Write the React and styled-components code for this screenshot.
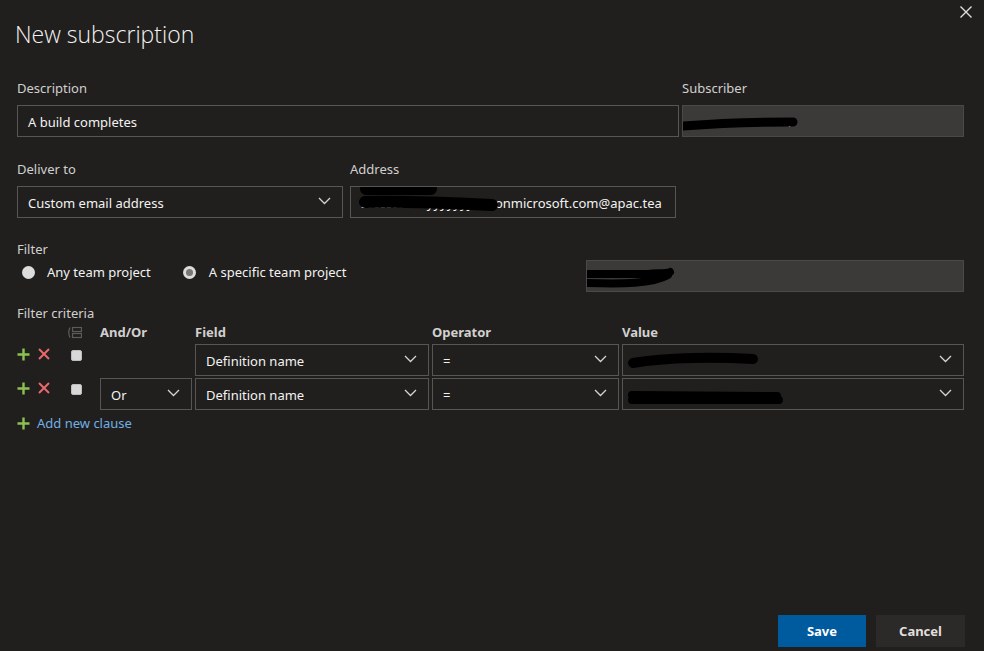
import React from "react";
import styled, { createGlobalStyle } from "styled-components";

const GlobalStyle = createGlobalStyle`
  html, body {
    margin: 0;
    padding: 0;
    background: #201f1e;
  }
  body {
    font-family: "Noto Sans", "Open Sans", sans-serif;
    font-size: 13px;
    color: #f3f2f1;
  }
`;

const Dialog = styled.div`
  position: relative;
  display: flex;
  flex-direction: column;
  min-height: 651px;
  box-sizing: border-box;
  padding: 0 20px 4px 17px;
`;

const Title = styled.h1`
  margin: 17px 0 0 -2px;
  font-family: "Open Sans", "Noto Sans", sans-serif;
  font-weight: 300;
  font-size: 23px;
  line-height: 34px;
  color: #f3f2f1;
`;

const CloseButton = styled.button`
  position: absolute;
  top: 5px;
  right: 11px;
  width: 14px;
  height: 14px;
  padding: 0;
  border: 0;
  background: none;
  display: flex;
  cursor: pointer;
`;

const Row = styled.div`
  display: grid;
  grid-template-columns: ${(p) => p.$cols};
  column-gap: ${(p) => p.$gap || 3}px;
  margin-top: ${(p) => p.$top || 0}px;
`;

const Field = styled.div`
  display: flex;
  flex-direction: column;
  margin-top: ${(p) => p.$top || 0}px;
`;

const Label = styled.div`
  font-size: 13px;
  line-height: 18px;
  color: #d2d0ce;
  margin-top: ${(p) => p.$top || 0}px;
  margin-bottom: ${(p) => (p.$gap === undefined ? 8 : p.$gap)}px;
`;

const Box = styled.div`
  position: relative;
  box-sizing: border-box;
  height: 32px;
  display: flex;
  align-items: center;
  padding: 2px 10px 0 10px;
  border: 1px solid ${(p) => (p.$disabled ? "#4a4948" : "#575655")};
  background: ${(p) => (p.$disabled ? "#3b3a39" : "transparent")};
  color: #f3f2f1;
  font-size: 13px;
  white-space: nowrap;
  overflow: hidden;
`;

const BoxText = styled.span`
  flex: 1;
  overflow: hidden;
`;

const ChevronIcon = styled.svg`
  flex: none;
  margin-top: -4px;
  margin-right: 1px;
`;

const Redact = styled.svg`
  position: absolute;
  left: ${(p) => p.$x}px;
  top: ${(p) => p.$y}px;
  overflow: visible;
  pointer-events: none;
`;

const FilterRow = styled.div`
  display: flex;
  align-items: flex-start;
`;

const Radios = styled.div`
  display: flex;
  align-items: center;
  padding-top: 4px;
`;

const RadioItem = styled.label`
  display: flex;
  align-items: center;
  margin-left: ${(p) => p.$offset || 0}px;
  font-size: 13px;
  color: #f3f2f1;
`;

const RadioDot = styled.span`
  box-sizing: border-box;
  width: 13px;
  height: 13px;
  border-radius: 50%;
  margin-right: ${(p) => p.$gap || 12}px;
  background: #dcdcdc;
  position: relative;
  &::after {
    content: "";
    display: ${(p) => (p.$checked ? "block" : "none")};
    position: absolute;
    left: 3px;
    top: 3px;
    width: 7px;
    height: 7px;
    border-radius: 50%;
    background: #777;
  }
`;

const ProjectBox = styled(Box)`
  margin-left: auto;
  margin-top: 1px;
  width: 378px;
`;

const Criteria = styled.div`
  display: grid;
  grid-template-columns: 80px 92px 234px 187px 1fr;
  column-gap: 3px;
  row-gap: 2px;
  margin-top: 1px;
`;

const HeadCell = styled.div`
  font-weight: 700;
  font-size: 13px;
  line-height: 18px;
  color: #d2d0ce;
  padding-left: ${(p) => p.$pad || 0}px;
  margin-bottom: 1px;
  display: flex;
  align-items: center;
`;

const Actions = styled.div`
  display: flex;
  align-items: flex-start;
  padding-top: 4px;
`;

const IconBtn = styled.button`
  border: 0;
  background: none;
  padding: 0;
  margin-right: ${(p) => p.$mr || 0}px;
  display: flex;
  cursor: pointer;
`;

const Check = styled.span`
  box-sizing: border-box;
  width: 11px;
  height: 11px;
  margin-top: 2px;
  border-radius: 2px;
  background: #d8d8d8;
  border: 1px solid #bdbdbd;
`;

const AddClause = styled.div`
  display: flex;
  align-items: center;
  margin-top: 4px;
  color: #71afe5;
  font-size: 13px;
  line-height: 18px;
  gap: 7px;
`;

const Footer = styled.div`
  margin-top: auto;
  display: flex;
  justify-content: flex-end;
  gap: 10px;
  margin-right: -1px;
`;

const Button = styled.button`
  width: ${(p) => (p.$primary ? 88 : 89)}px;
  height: 32px;
  border: 0;
  font-family: "Noto Sans", "Open Sans", sans-serif;
  font-weight: 700;
  font-size: 13px;
  color: ${(p) => (p.$primary ? "#ffffff" : "#e1dfdd")};
  background: ${(p) => (p.$primary ? "#005a9e" : "#2b2a29")};
  cursor: pointer;
`;

function Chevron() {
  return (
    <ChevronIcon width="13" height="8" viewBox="0 0 13 8">
      <polyline points="1,1 6.5,6.5 12,1" fill="none" stroke="#d6d4d2" strokeWidth="1.3" />
    </ChevronIcon>
  );
}

function Scribble({ x, y, w, h, d, sw = 9 }) {
  return (
    <Redact $x={x} $y={y} width={w} height={h} viewBox={`0 0 ${w} ${h}`}>
      <path d={d} fill="none" stroke="#000" strokeWidth={sw} strokeLinecap="round" strokeLinejoin="round" />
    </Redact>
  );
}

function Select({ children, redact }) {
  return (
    <Box>
      <BoxText>{children}</BoxText>
      <Chevron />
      {redact}
    </Box>
  );
}

function Plus({ size = 13 }) {
  return (
    <svg width={size} height={size} viewBox="0 0 13 13">
      <path d="M6.5 0.5v12M0.5 6.5h12" stroke="#8cc152" strokeWidth="2.4" />
    </svg>
  );
}

function Cross() {
  return (
    <svg width="12" height="12" viewBox="0 0 12 12">
      <path d="M1 1l10 10M11 1L1 11" stroke="#e9686c" strokeWidth="2" />
    </svg>
  );
}

function GroupIcon() {
  return (
    <svg width="15" height="13" viewBox="0 0 15 13">
      <path d="M3 1.5Q0.5 6.5 3 11.5" fill="none" stroke="#5d5c5b" strokeWidth="1.2" />
      <rect x="5.5" y="1.5" width="9" height="4" fill="none" stroke="#5d5c5b" strokeWidth="1.2" />
      <rect x="5.5" y="7.5" width="9" height="4" fill="none" stroke="#5d5c5b" strokeWidth="1.2" />
    </svg>
  );
}

function ClauseRow({ first }) {
  return (
    <>
      <Actions>
        <IconBtn $mr={8}><Plus /></IconBtn>
        <IconBtn $mr={21}><Cross /></IconBtn>
        <Check />
      </Actions>
      {first ? <div /> : <Select>Or</Select>}
      <Select>Definition name</Select>
      <Select>=</Select>
      <Select
        redact={
          first ? (
            <Scribble x={4} y={8} w={130} h={16} d="M6 10 C40 4 90 4 126 6" sw={10} />
          ) : (
            <Scribble x={4} y={10} w={158} h={16} d="M5 6 L150 7 M5 11 L152 11" sw={8} />
          )
        }
      />
    </>
  );
}

export default function App() {
  return (
    <>
      <GlobalStyle />
      <Dialog>
        <CloseButton aria-label="Close">
          <svg width="14" height="14" viewBox="0 0 14 14">
            <path d="M1.5 1.5l11 11M12.5 1.5l-11 11" stroke="#e1dfdd" strokeWidth="1.4" />
          </svg>
        </CloseButton>
        <Title>New subscription</Title>

        <Row $cols="662px 1fr" $top={28}>
          <Field>
            <Label>Description</Label>
            <Box>A build completes</Box>
          </Field>
          <Field>
            <Label>Subscriber</Label>
            <Box $disabled>
              <BoxText>
                &nbsp;&nbsp;&nbsp;&nbsp;&nbsp;&nbsp;&nbsp;&nbsp;&nbsp;&nbsp;&nbsp;&nbsp;&nbsp;&nbsp;&nbsp;&nbsp;&nbsp;&nbsp;&nbsp;&nbsp;&nbsp;&nbsp;&nbsp;&nbsp;&nbsp;&nbsp;&nbsp;&nbsp;ı
              </BoxText>
              <Scribble x={-4} y={10} w={120} h={16} d="M4 10 C30 8 60 6 114 6" sw={9} />
            </Box>
          </Field>
        </Row>

        <Row $cols="326px 326px" $gap={7} $top={23}>
          <Field>
            <Label>Deliver to</Label>
            <Select>Custom email address</Select>
          </Field>
          <Field>
            <Label>Address</Label>
            <Box>
              <BoxText>ssssssssss.yyyyyyy.ttttonmicrosoft.com@apac.tea</BoxText>
              <Scribble x={10} y={-2} w={140} h={32} d="M5 4 L70 4 M4 17 C40 16 90 18 131 20" sw={12} />
            </Box>
          </Field>
        </Row>

        <Field $top={22}>
          <Label $gap={1}>Filter</Label>
          <FilterRow>
            <Radios>
              <RadioItem $offset={5}>
                <RadioDot />
                Any team project
              </RadioItem>
              <RadioItem $offset={32}>
                <RadioDot $checked $gap={13} />
                A specific team project
              </RadioItem>
            </Radios>
            <ProjectBox $disabled>
              <Scribble x={-5} y={8} w={96} h={20} d="M6 5 L66 5 C80 4 86 4 88 3 M5 14 C40 15 70 15 86 6" sw={8} />
            </ProjectBox>
          </FilterRow>
        </Field>

        <Label $gap={0} $top={12}>Filter criteria</Label>
        <Criteria>
          <HeadCell $pad={50}><GroupIcon /></HeadCell>
          <HeadCell>And/Or</HeadCell>
          <HeadCell>Field</HeadCell>
          <HeadCell>Operator</HeadCell>
          <HeadCell>Value</HeadCell>
          <ClauseRow first />
          <ClauseRow />
        </Criteria>

        <AddClause>
          <Plus />
          Add new clause
        </AddClause>

        <Footer>
          <Button $primary>Save</Button>
          <Button>Cancel</Button>
        </Footer>
      </Dialog>
    </>
  );
}
